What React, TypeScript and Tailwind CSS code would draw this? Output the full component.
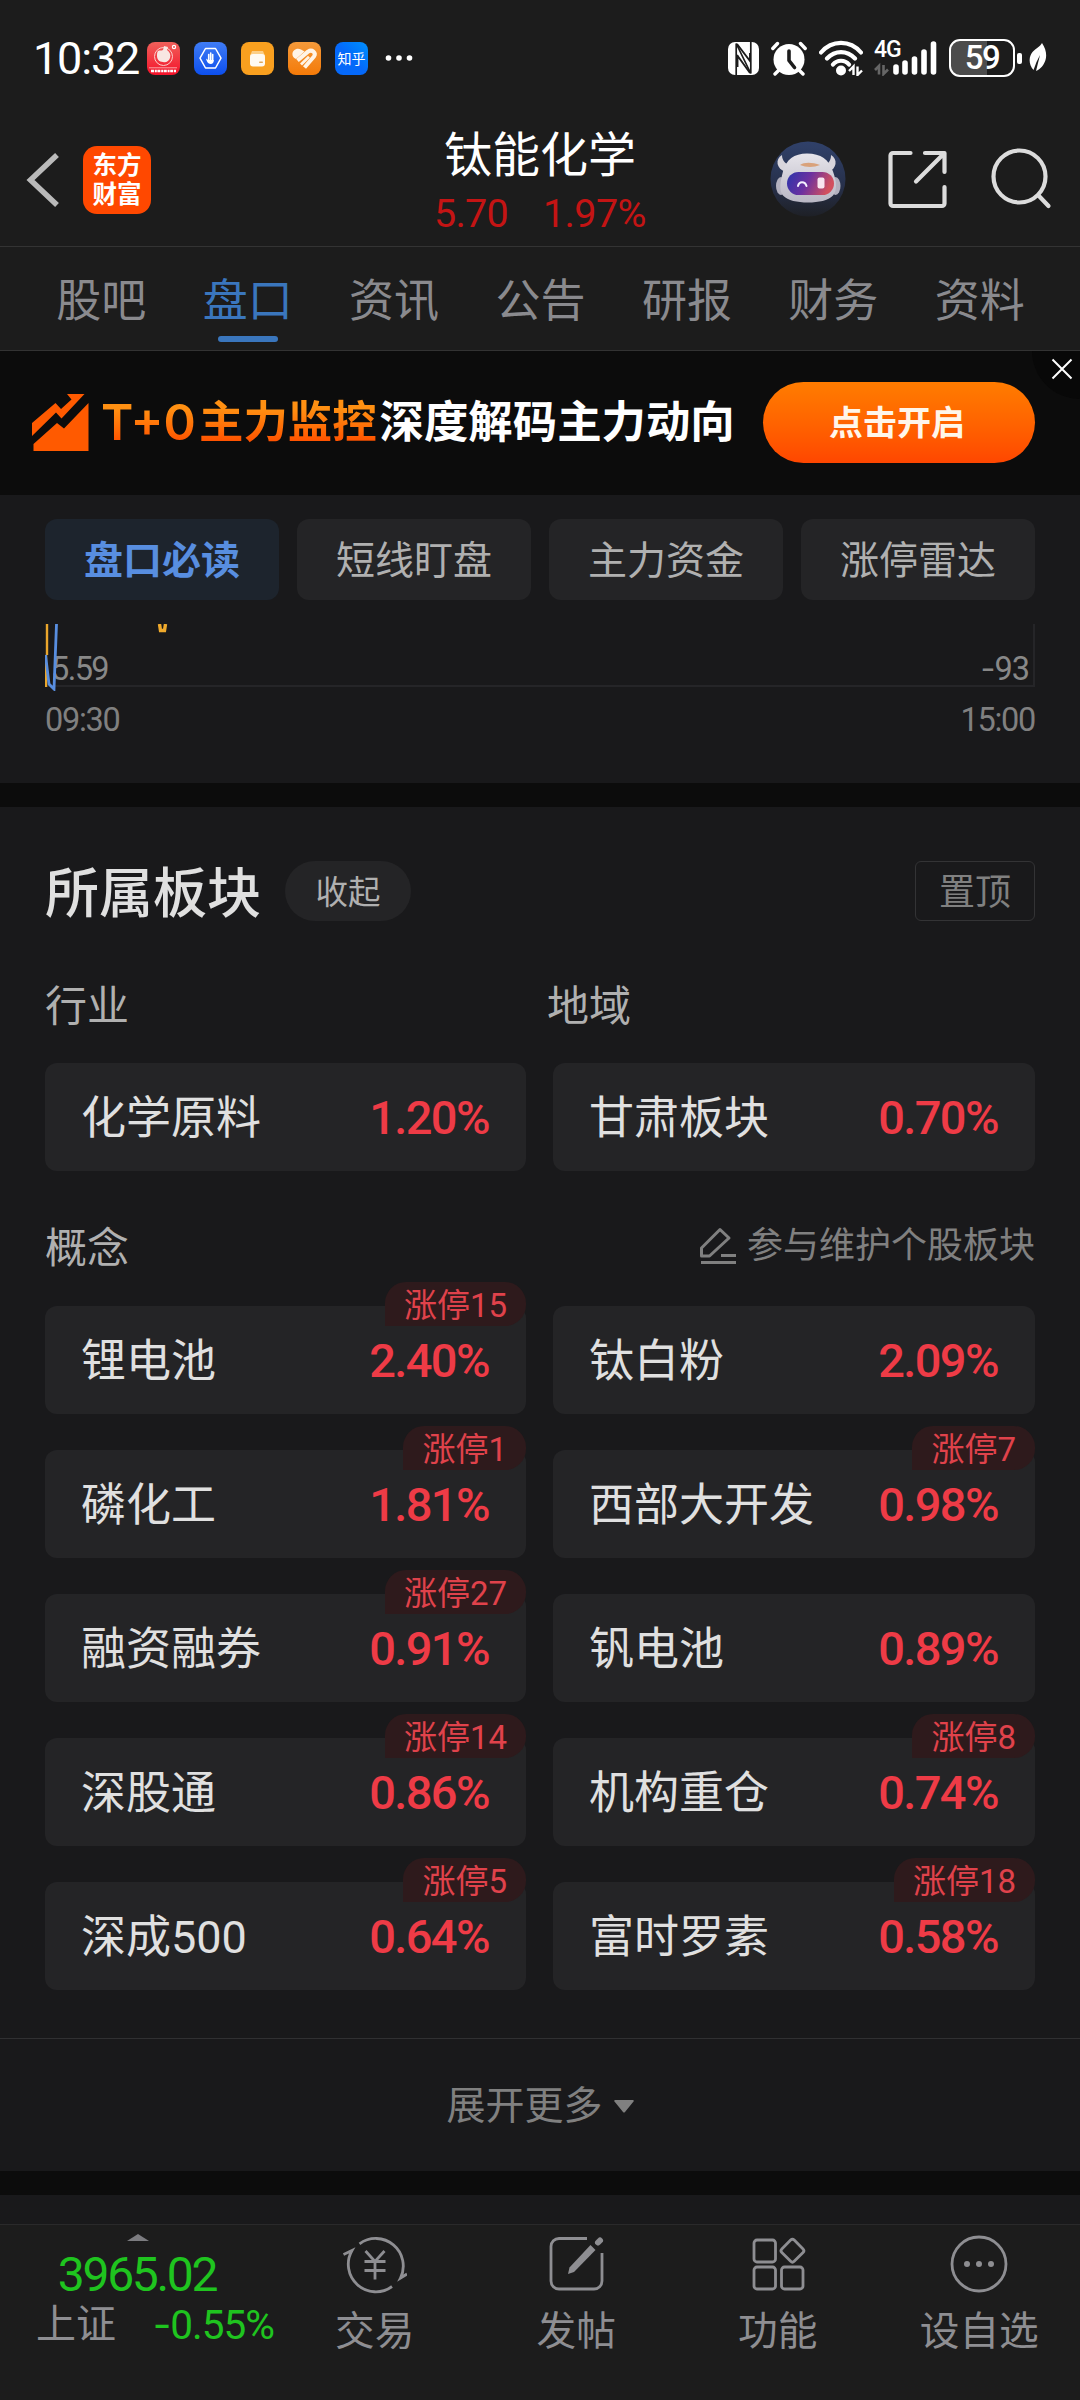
import React from "react";

type Board = { name: string; pct: string; limit?: number };

const tabs = ["股吧", "盘口", "资讯", "公告", "研报", "财务", "资料"];
const segments = ["盘口必读", "短线盯盘", "主力资金", "涨停雷达"];
const regions: Board[] = [
  { name: "化学原料", pct: "1.20%" },
  { name: "甘肃板块", pct: "0.70%" },
];
const concepts: Board[] = [
  { name: "锂电池", pct: "2.40%", limit: 15 },
  { name: "钛白粉", pct: "2.09%" },
  { name: "磷化工", pct: "1.81%", limit: 1 },
  { name: "西部大开发", pct: "0.98%", limit: 7 },
  { name: "融资融券", pct: "0.91%", limit: 27 },
  { name: "钒电池", pct: "0.89%" },
  { name: "深股通", pct: "0.86%", limit: 14 },
  { name: "机构重仓", pct: "0.74%", limit: 8 },
  { name: "深成500", pct: "0.64%", limit: 5 },
  { name: "富时罗素", pct: "0.58%", limit: 18 },
];

function StatusBar() {
  return (
    <div className="flex h-[117px] items-start pl-[33px] pr-[33px] text-white">
      <div className="mt-[36px] w-[107px] whitespace-nowrap text-[45px] leading-[46px] tracking-[-1.2px]">10:32</div>
      <div className="ml-[7px] mt-[42px] flex gap-[14px]">
        <svg width="33" height="33" viewBox="0 0 33 33">
          <defs>
            <linearGradient id="gRed" x1="0" y1="0" x2="0" y2="1">
              <stop offset="0" stopColor="#f0605a" />
              <stop offset="1" stopColor="#f5122a" />
            </linearGradient>
          </defs>
          <rect width="33" height="33" rx="8" fill="url(#gRed)" />
          <circle cx="16.5" cy="14.5" r="9" fill="none" stroke="#fbd0cc" strokeWidth="1" />
          <path d="M11 9c2-1 3 0 5-1l1-4 4 1-1 3c3 2 4 5 3 8s-4 5-7 4c-4 0-6-3-6-6 0-2 0-4 1-5z" fill="#f8e6e2" />
          <circle cx="27" cy="5" r="1.6" fill="none" stroke="#fff" strokeWidth="1.2" />
          <path d="M2 25.8h28" stroke="#fbc4c4" strokeWidth=".8" />
          <path d="M4 29h25" stroke="#fff" strokeWidth="2.6" strokeDasharray="3 .8 2 .6" />
        </svg>
        <svg width="33" height="33" viewBox="0 0 33 33">
          <defs>
            <linearGradient id="gBlue" x1="0" y1="0" x2="0" y2="1">
              <stop offset="0" stopColor="#3f7cf5" />
              <stop offset="1" stopColor="#0d4fee" />
            </linearGradient>
          </defs>
          <rect width="33" height="33" rx="8" fill="url(#gBlue)" />
          <path d="M11.5 6.5h10l5.5 9.7-5.5 9.8h-10L6 16.2z" fill="none" stroke="#fff" strokeWidth="1.5" strokeLinejoin="round" />
          <path d="M14.7 18.5v-6M16.7 18v-7M18.7 18.5v-6" stroke="#fff" strokeWidth="1.6" strokeLinecap="round" />
          <path d="M12 16.5l2.2 1.5h5.5c.3 2-.7 4-3.2 4s-3.7-2.3-4.5-5.5z" fill="#fff" />
        </svg>
        <svg width="33" height="33" viewBox="0 0 33 33">
          <rect width="33" height="33" rx="8" fill="#f9a01f" />
          <path d="M11 9h11l2 5H9z" fill="#fccf86" />
          <rect x="9" y="12" width="15" height="12.5" rx="3" fill="#fffaf0" />
          <rect x="18" y="19.5" width="4" height="1.5" rx=".7" fill="#e0a85c" />
        </svg>
        <svg width="33" height="33" viewBox="0 0 33 33">
          <defs>
            <linearGradient id="gOrange" x1="0" y1="0" x2="0" y2="1">
              <stop offset="0" stopColor="#f59a3a" />
              <stop offset="1" stopColor="#f47a08" />
            </linearGradient>
          </defs>
          <rect width="33" height="33" rx="8" fill="url(#gOrange)" />
          <path d="M4.500 13C4 8 9 5.500 13 7.500L16.500 9.500L8 17C6 16 4.500 14.500 4.500 13z" fill="#fff4e6" />
          <path d="M9.500 18.500L20 9.600c4-2.600 8.500 1 6 4.900L16.500 25.500" fill="none" stroke="#fff4e6" strokeWidth="4" strokeLinejoin="round" />
          <path d="M13 22.500l8-7.800" stroke="#fff4e6" strokeWidth="2.800" />
        </svg>
        <div className="flex h-[33px] w-[33px] items-center justify-center rounded-[8px] bg-linear-to-bl from-[#0590fb] via-[#0569fa] to-[#0569fa] text-[14px] leading-[14px]">
          知乎
        </div>
      </div>
      <svg className="ml-[17px] mt-[54px]" width="28" height="9" viewBox="0 0 28 9">
        <circle cx="3.5" cy="4" r="2.8" fill="#fff" />
        <circle cx="14" cy="4" r="2.8" fill="#fff" />
        <circle cx="24.5" cy="4" r="2.8" fill="#fff" />
      </svg>
      <div className="flex-1" />
      <div className="mt-[38px] flex h-[40px] items-start">
        <svg className="mt-[4px]" width="31" height="33" viewBox="0 0 31 33">
          <rect width="31" height="33" rx="7" fill="#fff" />
          <path d="M8.2 33V1.5L22.8 31.5V0" fill="none" stroke="#1c1c1c" strokeWidth="1.7" />
          <path d="M9 2L22 19V11M9 13L22 31M9.5 13V25" fill="none" stroke="#1c1c1c" strokeWidth="1.9" />
        </svg>
        <svg className="ml-[12px] mt-[3px]" width="36" height="35" viewBox="0 0 36 35">
          <circle cx="18" cy="18.5" r="15.5" fill="#fff" />
          <path d="M1.8 7.500L6.500 2.500M34.200 7.500L29.500 2.500M8 29l-4 4M28 29l4 4" stroke="#fff" strokeWidth="3.4" strokeLinecap="round" />
          <path d="M18 10v9.500l5.500 7" fill="none" stroke="#1c1c1c" strokeWidth="3.6" strokeLinecap="round" strokeLinejoin="round" />
        </svg>
        <svg className="ml-[12px] mt-[2px]" width="44" height="36" viewBox="0 0 44 36">
          <path d="M2 12.500C13-.3 31-.3 42 12.500M8 18.500c8-8.500 20-8.500 28 0M14 24.500c4-5 12-5 16 0" fill="none" stroke="#fff" strokeWidth="4.2" strokeLinecap="round" />
          <circle cx="22" cy="30.5" r="5" fill="#fff" />
          <path d="M30 31l4.500-4.500V35M38.500 26.500V35l4.500-4.500" fill="none" stroke="#fff" strokeWidth="2.4" />
        </svg>
        <div className="relative ml-[11px] mt-[2px] h-[36px] w-[63px]">
          <svg width="63" height="36" viewBox="0 0 63 36">
            <path d="M1 30l4-4v8.500M9.500 25v9l4.500-4.500" fill="none" stroke="#666" strokeWidth="2.6" />
            <path d="M22 27v5M31 23v9M40.500 19v13M50 12v20M59.500 4v28" stroke="#fff" strokeWidth="5.6" strokeLinecap="round" />
          </svg>
          <span className="absolute left-0 top-[-2px] text-[23px] font-medium leading-[24px] tracking-[-1px]">4G</span>
        </div>
        <div className="ml-[12px] mt-[1px] flex items-center">
          <div className="flex h-[38px] w-[66px] items-center justify-center rounded-[11px] border-[2.5px] border-white bg-linear-to-r from-[#4c4c4c] from-58% to-transparent to-58% text-[33px] font-medium leading-[34px] tracking-[-1.5px]">
            59
          </div>
          <div className="ml-[2px] h-[11px] w-[5px] rounded-[2px] bg-white" />
        </div>
        <svg className="ml-[7px] mt-[5px]" width="18" height="29" viewBox="0 0 18 29">
          <path d="M13 0c4 6 5 12 3.500 17-1.500 5-5 9-9.500 11l2.500-10 1.500-6-3.500 7L4.500 27C-1 21 0 13 3.500 9 7 5 11 4 13 0z" fill="#fff" />
        </svg>
      </div>
    </div>
  );
}

function Robot() {
  return (
    <svg width="76" height="76" viewBox="0 0 76 76">
      <defs>
        <linearGradient id="rbBg" x1="0" y1="0" x2="0" y2="1">
          <stop offset="0" stopColor="#30416a" />
          <stop offset=".6" stopColor="#27304a" />
          <stop offset="1" stopColor="#1e2026" />
        </linearGradient>
        <linearGradient id="rbVisor" x1="0" y1="0" x2="1" y2=".25">
          <stop offset="0" stopColor="#2b35ab" />
          <stop offset=".5" stopColor="#6b30a0" />
          <stop offset="1" stopColor="#d2505e" />
        </linearGradient>
        <linearGradient id="rbHead" x1="0" y1="0" x2="0" y2="1">
          <stop offset="0" stopColor="#e6e4ea" />
          <stop offset="1" stopColor="#b9b7c4" />
        </linearGradient>
      </defs>
      <circle cx="38" cy="38" r="37.5" fill="url(#rbBg)" />
      <path d="M12 14c-7 4-6 14 4 17l6-7c-6 0-10-4-10-10zM61 14c7 4 6 14-3 17l-6-7c6 0 9-4 9-10z" fill="#d8d5dc" />
      <ellipse cx="11" cy="45" rx="5" ry="9" fill="#b3b1bf" />
      <ellipse cx="65.5" cy="45" rx="5" ry="9" fill="#b3b1bf" />
      <path d="M37 12.500c14 0 22 6 26 18 4 11 4 19 0 24-5 5-14 7-25 7s-20-2-25-7c-4-5-3-13 0-24 3-12 11-18 24-18z" fill="url(#rbHead)" />
      <path d="M30 24c4-3 12-3 20 0-6 2.500-14 2.500-20 0z" fill="#d9a27c" />
      <rect x="17" y="31" width="47" height="23" rx="11.5" fill="url(#rbVisor)" />
      <path d="M28 45c1-5 7-5 8.500 0" fill="none" stroke="#f4f0ff" strokeWidth="2" strokeLinecap="round" />
      <rect x="47.5" y="36.5" width="7" height="11" rx="2" fill="#f8e4f0" />
    </svg>
  );
}

function Header() {
  return (
    <div className="flex h-[130px] items-start border-b border-[#333]">
      <svg className="ml-[25px] mt-[35px]" width="36" height="56" viewBox="0 0 36 56">
        <path d="M32 3L5.500 28L32 53" fill="none" stroke="#bababa" strokeWidth="5.5" />
      </svg>
      <div className="ml-[22px] mt-[29px] flex h-[68px] w-[68px] flex-col items-center justify-center rounded-[14px] bg-[#ff4800] text-[24.5px] font-bold leading-[29px] text-white">
        <span>东方</span>
        <span>财富</span>
      </div>
      <div className="ml-[268px] mt-[9px] flex w-[242px] flex-col items-center whitespace-nowrap">
        <div className="text-[48px] leading-[60px] text-white">钛能化学</div>
        <div className="mt-[4px] flex gap-[35px] text-[39.5px] leading-[48px] text-[#c41414]">
          <span className="tracking-[-.8px]">5.70</span>
          <span className="tracking-[-.6px]">1.97%</span>
        </div>
      </div>
      <div className="ml-[109px] mt-[24px]">
        <Robot />
      </div>
      <svg className="ml-[41px] mt-[32px]" width="62" height="62" viewBox="0 0 62 62" fill="none" stroke="#dcdcdc" strokeWidth="4.2" strokeLinecap="round" strokeLinejoin="round">
        <path d="M23.500 4H6a2.500 2.500 0 0 0-2.500 2.500v48A2.500 2.500 0 0 0 6 57h49a2.500 2.500 0 0 0 2.500-2.500V38M38 4h19.500v19M56 5.500L29 32.500" />
      </svg>
      <svg className="ml-[40px] mt-[30px]" width="64" height="64" viewBox="0 0 64 64" fill="none" stroke="#dcdcdc" strokeWidth="4.2" strokeLinecap="round">
        <circle cx="30.5" cy="29.5" r="26" />
        <path d="M49.500 48.500L59.500 59" />
      </svg>
    </div>
  );
}

function Tabs() {
  return (
    <div className="flex h-[104px] border-b border-[#333] pl-[28px] pr-[27px]">
      {tabs.map((t, i) => (
        <div key={t} className="flex flex-1 flex-col items-center">
          <div className={"mt-[25px] text-[45px] leading-[60px] " + (i === 1 ? "text-[#3a76bd]" : "text-[#8a8a8e]")}>{t}</div>
          {i === 1 && <div className="mt-[4px] h-[6px] w-[60px] rounded-full bg-[#3a76bd]" />}
        </div>
      ))}
    </div>
  );
}

function Banner() {
  return (
    <div className="relative flex h-[144px] items-center overflow-hidden bg-[#0c0c0c] pl-[32px]">
      <svg className="-mt-[2px]" width="57" height="57" viewBox="0 0 57 57" fill="#ff5a00">
        <path d="M0 29L23.500 9L29 15L39.500 5.500L35 0H52.500L29.500 24.500L24 18.500L0 42z" />
        <path d="M1.500 50L25 29L32 34.500L56.500 9V57H1.500z" />
      </svg>
      <div className="ml-[12px] flex w-[636px] whitespace-nowrap text-[44.4px] font-bold leading-[60px]">
        <span className="w-[98px] bg-linear-to-b from-[#ff9012] from-25% to-[#ff5200] to-80% bg-clip-text font-['Inter'] text-[49px] font-semibold text-transparent">
          T+0
        </span>
        <span className="bg-linear-to-b from-[#ff9012] from-25% to-[#ff5200] to-80% bg-clip-text text-transparent">主力监控</span>
        <span className="ml-[3px] text-white">深度解码主力动向</span>
      </div>
      <div className="-mt-px ml-[26px] flex h-[81px] w-[272px] items-center justify-center rounded-full bg-linear-to-b from-[#ff7c00] to-[#ff4600] pr-[4px] text-[34px] font-bold leading-[48px] text-[#fff6ea]">
        点击开启
      </div>
      <div className="absolute -top-[48px] right-[-48px] h-[96px] w-[96px] rounded-full bg-[#080808]" />
      <svg className="absolute right-[7px] top-[7px]" width="22" height="22" viewBox="0 0 22 22">
        <path d="M1.500 1.500L20.500 20.500M20.500 1.500L1.500 20.500" stroke="#fff" strokeWidth="2" />
      </svg>
    </div>
  );
}

function ChartSection() {
  return (
    <div className="h-[288px] px-[45px] pt-[24px]">
      <div className="grid grid-cols-4 gap-[18px]">
        {segments.map((s, i) => (
          <div
            key={s}
            className={
              "flex h-[81px] items-center justify-center rounded-[12px] pt-[3px] text-[39px] leading-[54px] " +
              (i === 0 ? "bg-[#1d242d] font-semibold text-[#588ee0]" : "bg-[#242426] text-[#b0b0b0]")
            }
          >
            {s}
          </div>
        ))}
      </div>
      <div className="relative mt-[24px] flex h-[63px] items-start justify-between border-b-2 border-r-2 border-[#252528] pl-[6px] pr-[4px] pt-[24px] text-[32.5px] leading-[42px] text-[#888]">
        <svg className="absolute left-0 top-0" width="170" height="67" viewBox="0 0 170 67" fill="none">
          <path d="M2 0V31M1 31V63" stroke="#eaa62c" strokeWidth="2.4" />
          <path d="M.5 31L4 60L9 65L11.500 0" stroke="#588ee0" strokeWidth="2.8" />
          <path d="M114.500 0L115.500 6.500H119.500L120.500 0" stroke="#f0aa2c" strokeWidth="3.400" />
        </svg>
        <span className="tracking-[-1.6px]">5.59</span>
        <span className="tracking-[-1px]"><span className="font-['Inter']">-</span>93</span>
      </div>
      <div className="mt-[12px] flex justify-between text-[32.5px] leading-[42px] tracking-[-1.3px] text-[#808080]">
        <span>09:30</span>
        <span>15:00</span>
      </div>
    </div>
  );
}

function BoardCard({ name, pct, limit }: Board) {
  return (
    <div className="relative flex h-[108px] items-center justify-between rounded-[12px] bg-[#242426] pl-[36px] pr-[37px]">
      <span className="pt-[4px] text-[45px] leading-[60px] text-[#e0e0e0]">{name}</span>
      <span className="pt-[2px] text-[47px] font-[480] leading-[60px] tracking-[-1.6px] text-[#ee3b46]">{pct}</span>
      {limit !== undefined && (
        <div className="absolute -top-[24px] right-0 flex h-[44px] items-center rounded-[21px] rounded-bl-none bg-[#2e1a1c] px-[19px] pt-[3px] text-[33px] leading-[41px] text-[#e0424b]">
          涨停<span>{limit}</span>
        </div>
      )}
    </div>
  );
}

function Boards() {
  return (
    <div className="px-[45px] pt-[54px]">
      <div className="flex h-[60px] items-center">
        <h2 className="w-[216px] pt-[8px] text-[54px] font-medium leading-[60px] text-[#e0e0e0]">所属板块</h2>
        <div className="ml-[24px] flex h-[60px] w-[126px] items-center justify-center rounded-full bg-[#242426] pt-[3px] text-[32.5px] leading-[48px] text-[#b0b0b0]">收起</div>
        <div className="ml-auto flex h-[60px] w-[120px] items-center justify-center rounded-[6px] border border-[#333335] pt-[3px] text-[36px] leading-[48px] text-[#808080]">置顶</div>
      </div>
      <div className="mt-[56px] flex h-[60px] text-[42px] leading-[60px] text-[#b0b0b0]">
        <span className="w-[502px]">行业</span>
        <span>地域</span>
      </div>
      <div className="mt-[26px] grid grid-cols-[481px_482px] gap-x-[27px]">
        {regions.map((b) => (
          <BoardCard key={b.name} {...b} />
        ))}
      </div>
      <div className="mt-[46px] flex h-[60px] items-center">
        <span className="pt-[4px] text-[42px] leading-[60px] text-[#b0b0b0]">概念</span>
        <div className="-mt-[3px] ml-auto flex items-center">
          <svg width="40" height="38" viewBox="0 0 40 38" fill="none" stroke="#808080" strokeWidth="3" strokeLinejoin="round">
            <path d="M22 2.500L31 11L11.500 29H3.500V21z" />
            <path d="M23 28.500H38M3 35.500H38" />
          </svg>
          <span className="ml-[9px] text-[36px] leading-[48px] text-[#808080]">参与维护个股板块</span>
        </div>
      </div>
      <div className="mt-[29px] grid grid-cols-[481px_482px] gap-x-[27px] gap-y-[36px]">
        {concepts.map((b) => (
          <BoardCard key={b.name} {...b} />
        ))}
      </div>
    </div>
  );
}

function NavItem({ label, children }: { label: string; children: React.ReactNode }) {
  return (
    <div className="flex flex-1 flex-col items-center">
      <svg className="mt-[7px]" width="64" height="64" viewBox="0 0 64 64" fill="none" stroke="#8e8e92" strokeWidth="2.8">
        {children}
      </svg>
      <div className="mt-[6px] text-[39.7px] leading-[60px] text-[#8e8e92]">{label}</div>
    </div>
  );
}

function BottomNav() {
  return (
    <div className="flex h-[176px] border-t border-[#2a2a2b] bg-[#1c1c1c]">
      <div className="w-[274px]">
        <svg className="ml-[127px] mt-[9px]" width="22" height="7" viewBox="0 0 22 7">
          <path d="M0 7L11 0L22 7z" fill="#7c7c80" />
        </svg>
        <div className="mt-[7px] w-[274px] text-center text-[48px] leading-[54px] tracking-[-2.3px] text-[#1fc41f]">3965.02</div>
        <div className="-mt-px flex items-start justify-between pl-[36px] text-[40px] leading-[48px] text-[#8e8e92]">
          <span>上证</span>
          <span className="text-[40.5px] tracking-[-1px] text-[#1fc41f]"><span className="font-['Inter']">-</span>0.55%</span>
        </div>
      </div>
      <NavItem label="交易">
        <path d="M16.500 11.800A27.500 27.500 0 0 1 57.500 46L64 42" />
        <path d="M.5 22.500L9 18.500A27.500 27.500 0 0 0 49 54.500" />
        <path d="M22.500 19L32 29.500L41.500 19M32 29.500V47.500M21.500 29.500H42.500M21.500 38.500H42.500" />
      </NavItem>
      <NavItem label="发帖">
        <path d="M43 6.500H15a8 8 0 0 0-8 8V49a8 8 0 0 0 8 8H50a8 8 0 0 0 8-8V21" />
        <path d="M54 10.500l2-2" strokeWidth="6" strokeLinecap="round" />
        <path d="M46.500 13L51.500 18L30 40L24 42L25.500 35.500z" fill="#8e8e92" stroke="none" />
      </NavItem>
      <NavItem label="功能">
        <rect x="8" y="8" width="21.5" height="22" rx="3" />
        <rect x="8" y="35" width="21.5" height="22" rx="3" />
        <rect x="35.5" y="35" width="21.5" height="22" rx="3" />
        <rect x="37.7" y="10" width="17.5" height="17.5" rx="2.5" transform="rotate(45 46.5 18.7)" />
      </NavItem>
      <NavItem label="设自选">
        <circle cx="32" cy="32" r="27" />
        <g fill="#8e8e92" stroke="none">
          <circle cx="20" cy="32" r="3" />
          <circle cx="32" cy="32" r="3" />
          <circle cx="44" cy="32" r="3" />
        </g>
      </NavItem>
    </div>
  );
}

export default function App() {
  return (
    <div className="flex h-[2400px] w-[1080px] flex-col overflow-hidden bg-[#19191b] font-['Roboto','Noto_Sans_CJK_SC',sans-serif]">
      <div className="bg-[#1c1c1c]">
        <StatusBar />
        <Header />
        <Tabs />
      </div>
      <Banner />
      <ChartSection />
      <div className="h-[24px] bg-[#0c0c0c]" />
      <Boards />
      <div className="mt-[48px] flex h-[133px] items-center justify-center border-t border-[#303032] pt-[2px] text-[39px] leading-[54px] text-[#808080]">
        展开更多
        <svg className="ml-[11px]" width="20" height="13" viewBox="0 0 20 13">
          <path d="M1.500 0h17a1 1 0 0 1 .8 1.800L11 12a1.300 1.300 0 0 1-2 0L.7 1.800A1 1 0 0 1 1.500 0z" fill="#808080" />
        </svg>
      </div>
      <div className="h-[24px] bg-[#0c0c0c]" />
      <div className="flex-1" />
      <BottomNav />
    </div>
  );
}
